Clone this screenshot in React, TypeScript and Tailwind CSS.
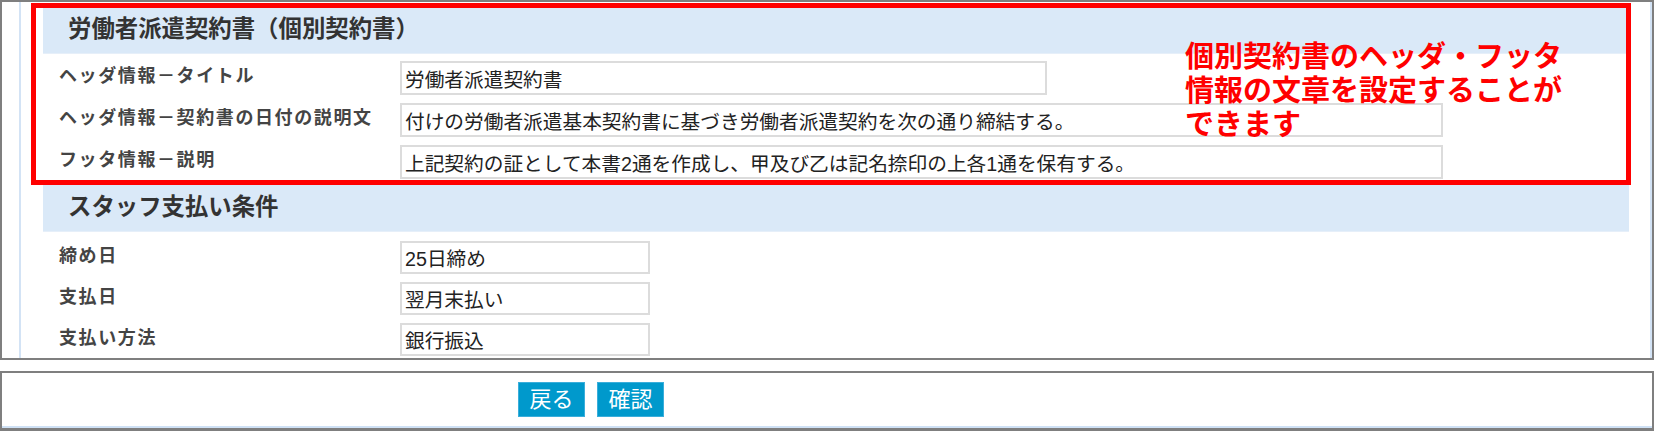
import React from "react";

const font = '"Liberation Sans", "Noto Sans CJK JP", sans-serif';

type Row = { label: string; value: string; width: string };

const contractRows: Row[] = [
  { label: "ヘッダ情報－タイトル", value: "労働者派遣契約書", width: "w-[647px]" },
  {
    label: "ヘッダ情報－契約書の日付の説明文",
    value: "付けの労働者派遣基本契約書に基づき労働者派遣契約を次の通り締結する。",
    width: "w-[1043px]",
  },
  {
    label: "フッタ情報－説明",
    value: "上記契約の証として本書2通を作成し、甲及び乙は記名捺印の上各1通を保有する。",
    width: "w-[1043px]",
  },
];

const payRows: Row[] = [
  { label: "締め日", value: "25日締め", width: "w-[250px]" },
  { label: "支払日", value: "翌月末払い", width: "w-[250px]" },
  { label: "支払い方法", value: "銀行振込", width: "w-[250px]" },
];

function SectionHeader({ title }: { title: string }) {
  return (
    <div className="flex h-[47px] items-center border-b border-[#e6eff9] bg-[#dae9f8] pl-[25px] text-[23.4px] font-bold text-[#333]">
      {title}
    </div>
  );
}

function FieldRow({ row, h }: { row: Row; h: string }) {
  return (
    <div className="flex items-center">
      <div className="w-[357px] shrink-0 pb-[3px] pl-[16px] text-[18px] font-bold tracking-[1.6px] text-[#444]">
        {row.label}
      </div>
      <input
        readOnly
        defaultValue={row.value}
        className={`${row.width} ${h} border-2 border-[#dcdcdc] bg-white pl-[3px] text-[19.7px] text-[#222] outline-none`}
        style={{ fontFamily: font }}
      />
    </div>
  );
}

export default function App() {
  return (
    <div className="relative h-[431px] w-[1654px] overflow-hidden bg-white" style={{ fontFamily: font }}>
      {/* main form panel */}
      <div className="flex h-[360px] border-2 border-[#7f7f7f]">
        <div className="ml-[17px] flex-1 overflow-hidden border-x-2 border-[#d3e3f5] pl-[22px] pr-[21px] pt-[5px]">
          <SectionHeader title="労働者派遣契約書（個別契約書）" />
          <div className="flex flex-col gap-[8px] pb-[6px] pt-[7px]">
            {contractRows.map((r) => (
              <FieldRow key={r.label} row={r} h="h-[34px]" />
            ))}
          </div>
          <SectionHeader title="スタッフ支払い条件" />
          <div className="flex flex-col gap-[8px] pt-[9px]">
            {payRows.map((r) => (
              <FieldRow key={r.label} row={r} h="h-[33px]" />
            ))}
          </div>
        </div>
      </div>

      {/* action bar */}
      <div className="mt-[11px] h-[60px] border-x-2 border-b-[3px] border-t-2 border-[#7f7f7f]">
        <div className="flex h-full items-center gap-[12px] border-b-2 border-[#cfe1f5] pl-[516px]">
          <button className="h-[35px] w-[67px] border border-[#3aaedb] bg-[#0099cc] text-[22px] text-white">
            戻る
          </button>
          <button className="h-[35px] w-[67px] border border-[#3aaedb] bg-[#0099cc] text-[22px] text-white">
            確認
          </button>
        </div>
      </div>

      {/* annotation overlay */}
      <div className="pointer-events-none absolute left-[31px] top-[3px] h-[182px] w-[1600px] border-[5px] border-[#ff0000]" />
      <div className="pointer-events-none absolute left-[1185px] top-[40px] text-[29px] font-bold leading-[34px] text-[#ff0000]">
        <div>個別契約書のヘッダ・フッタ</div>
        <div>情報の文章を設定することが</div>
        <div>できます</div>
      </div>
    </div>
  );
}
